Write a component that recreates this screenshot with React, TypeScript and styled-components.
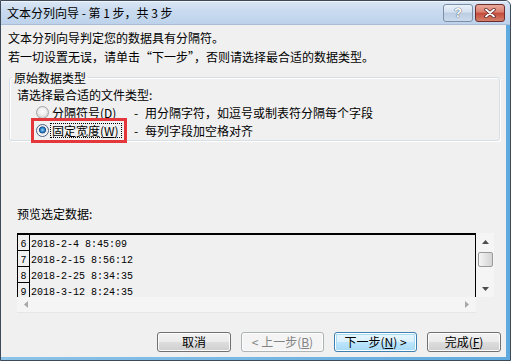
import styled, { createGlobalStyle, css } from 'styled-components';

const FONT = `"Noto Sans CJK SC", "Liberation Sans", sans-serif`;

const GlobalStyle = createGlobalStyle`
  html, body { margin: 0; padding: 0; background: #fff; overflow: hidden; }
  body { font-family: ${FONT}; font-size: 12px; color: #000; }
`;

const Window = styled.div`
  width: 511px;
  height: 361px;
  box-sizing: border-box;
  display: flex;
  flex-direction: column;
  border: 1px solid #3e4a57;
  border-top-right-radius: 6px;
  overflow: hidden;
  background: #5eaadf;
`;

const TitleBar = styled.div`
  height: 23px;
  flex-shrink: 0;
  display: flex;
  align-items: center;
  justify-content: space-between;
  padding: 0 5px 0 6px;
  background: linear-gradient(#dae7f5, #c8daef 45%, #bdd3eb);
  border-bottom: 1px solid #a9bed6;
  box-shadow: inset 0 1px 0 #f0f5fb;
`;

const TitleText = styled.span`
  line-height: 16px;
  color: #000;
`;

const CaptionButtons = styled.div`
  display: flex;
  gap: 2px;
`;

const CaptionButton = styled.span<{ $close?: boolean }>`
  width: 30px;
  height: 18px;
  box-sizing: border-box;
  border-radius: 3px;
  display: flex;
  align-items: center;
  justify-content: center;
  font: bold 13px/1 "Liberation Sans", sans-serif;
  color: #fff;
  text-shadow: 0 0 1px #45556a, 0 0 1px #45556a;
  ${({ $close }) =>
    $close
      ? css`
          border: 1px solid #6d2d2d;
          background: linear-gradient(#e9a99b, #d98070 45%, #c54a3b 50%, #d2806a);
        `
      : css`
          border: 1px solid #7d8fa6;
          background: linear-gradient(#eaf1f9, #d3e0ef 45%, #bccde3 50%, #cbdaeb);
        `}
`;

const Frame = styled.div`
  flex: 1;
  min-height: 0;
  display: flex;
  padding: 0 4px 3px 0;
  background: linear-gradient(to right, #8cc3e8, #5eaadf);
`;

const Client = styled.div`
  flex: 1;
  display: flex;
  flex-direction: column;
  background: #f0f0f0;
  padding: 3px 5px 0 7px;
`;

const IntroLine = styled.div`
  line-height: 19px;
  white-space: nowrap;
`;

const GroupBox = styled.fieldset`
  margin: 4px 1px 0 1px;
  padding: 2px 6px 1px 7px;
  min-width: 0;
  border: 1px solid #d5dfe5;
  border-radius: 3px;
  box-shadow: inset 1px 1px 0 #fff, 1px 1px 0 #fff;
`;

const GroupTitle = styled.legend`
  margin-left: -5px;
  padding: 0 2px;
  line-height: 15px;
`;

const Prompt = styled.div`
  line-height: 16px;
`;

const OptionRow = styled.div`
  display: flex;
  align-items: center;
  height: 18px;
  padding-left: 19px;
  white-space: nowrap;
`;

const Pick = styled.span<{ $marked?: boolean }>`
  display: inline-flex;
  align-items: center;
  gap: 1px;
  ${({ $marked }) =>
    $marked &&
    css`
      outline: 3px solid #e4373c;
      outline-offset: 2px;
    `}
`;

const Radio = styled.span<{ $checked?: boolean }>`
  width: 13px;
  height: 13px;
  box-sizing: border-box;
  border-radius: 50%;
  border: 1px solid ${({ $checked }) => ($checked ? '#4d6185' : '#a3a3a3')};
  background: ${({ $checked }) =>
    $checked
      ? 'radial-gradient(circle at 50% 45%, #9fdcf8 0, #3d91d3 1.6px, #1a4f8f 3.2px, #e6e6e6 3.8px, #fbfbfb 5.5px)'
      : 'radial-gradient(circle at 50% 40%, #fdfdfd 0, #ececec 4px, #d6d6d6 6px)'};
`;

const OptionLabel = styled.span<{ $focused?: boolean }>`
  width: 68px;
  padding: 0 1px;
  line-height: 13px;
  border: 1px dotted ${({ $focused }) => ($focused ? '#000' : 'transparent')};

  u {
    text-decoration-thickness: 1px;
  }
`;

const OptionHint = styled.span`
  margin-left: 12px;

  b {
    font-weight: normal;
    display: inline-block;
    width: 11px;
  }
`;

const PreviewCaption = styled.div`
  margin: 64px 0 0 9px;
  line-height: 17px;
`;

const Preview = styled.div`
  margin: 11px 0 0 9px;
  width: 477px;
  display: grid;
  grid-template-columns: 459px 18px;
  grid-template-rows: 64px 16px;
`;

const Sheet = styled.div`
  border: solid #000;
  border-width: 2px 1px 0 1px;
  overflow: hidden;
  background: #f0f0f0;
`;

const SheetRow = styled.div`
  display: flex;
  height: 16px;
  font: 10px/11px "Liberation Mono", monospace;
  color: #000;
`;

const RowNo = styled.span`
  width: 12px;
  padding-top: 4px;
  box-sizing: border-box;
  text-align: center;
  border-right: 1px solid #000;
  border-bottom: 1px solid #000;
`;

const Cell = styled.span`
  padding: 4px 0 0 1px;
`;

const VScroll = styled.div`
  display: flex;
  flex-direction: column;
  align-items: center;
  padding: 7px 0 6px;
  background: #f5f5f5;
`;

const Thumb = styled.span`
  width: 15px;
  height: 15px;
  box-sizing: border-box;
  margin-top: 8px;
  border: 1px solid #9a9a9a;
  border-radius: 2px;
  background: linear-gradient(to right, #f5f5f5, #e4e4e4 50%, #d4d4d4);
`;

const Spacer = styled.span`
  flex: 1;
`;

const HScroll = styled.div`
  display: flex;
  align-items: center;
  justify-content: space-between;
  padding: 0 7px;
  background: #f5f5f5;
  border-bottom: 1px solid #e6e6e6;
`;

const Corner = styled.div`
  background: #f0f0f0;
`;

const Actions = styled.div`
  display: flex;
  justify-content: flex-end;
  gap: 10px;
  margin-top: 19px;
`;

const Button = styled.button<{ $w: number; $kind?: 'default' | 'disabled' }>`
  width: ${({ $w }) => $w}px;
  height: 20px;
  padding: 0;
  box-sizing: border-box;
  font: 12px/16px ${FONT};
  color: #000;
  border: 1px solid #707070;
  border-radius: 3px;
  background: linear-gradient(#f2f2f2, #ebebeb 50%, #dddddd 50%, #cfcfcf);
  box-shadow: inset 0 0 0 1px #fcfcfc;
  ${({ $kind }) =>
    $kind === 'default' &&
    css`
      border-color: #3c7fb1;
      background: linear-gradient(#eaf6fd, #d9f0fc 50%, #bee6fd 50%, #a7d9f5);
      box-shadow: inset 0 0 0 1px #fff, inset 0 0 0 2px #a9dcf6;
    `}
  ${({ $kind }) =>
    $kind === 'disabled' &&
    css`
      color: #838383;
      border-color: #adb2b5;
      background: #f4f4f4;
    `}
`;

const Arrow = ({ dir, color }: { dir: 'up' | 'down' | 'left' | 'right'; color: string }) => {
  const shapes = {
    up: { w: 7, h: 4, p: '0,4 3.5,0 7,4' },
    down: { w: 7, h: 4, p: '0,0 7,0 3.5,4' },
    left: { w: 4, h: 7, p: '4,0 4,7 0,3.5' },
    right: { w: 4, h: 7, p: '0,0 4,3.5 0,7' },
  };
  const s = shapes[dir];
  return (
    <svg width={s.w} height={s.h} viewBox={`0 0 ${s.w} ${s.h}`}>
      <polygon points={s.p} fill={color} />
    </svg>
  );
};

const rows = [
  { no: '6', value: '2018-2-4 8:45:09' },
  { no: '7', value: '2018-2-15 8:56:12' },
  { no: '8', value: '2018-2-25 8:34:35' },
  { no: '9', value: '2018-3-12 8:24:35' },
];

export default function App() {
  return (
    <>
      <GlobalStyle />
      <Window lang="zh-CN">
        <TitleBar>
          <TitleText>文本分列向导 - 第 1 步，共 3 步</TitleText>
          <CaptionButtons>
            <CaptionButton>?</CaptionButton>
            <CaptionButton $close>
              <svg width="12" height="10" viewBox="0 0 12 10">
                <path d="M2 1.5 L10 8.5 M10 1.5 L2 8.5" stroke="#5a2424" strokeWidth="3.4" strokeLinecap="round" />
                <path d="M2 1.5 L10 8.5 M10 1.5 L2 8.5" stroke="#fff" strokeWidth="1.8" strokeLinecap="round" />
              </svg>
            </CaptionButton>
          </CaptionButtons>
        </TitleBar>
        <Frame>
          <Client>
            <IntroLine>文本分列向导判定您的数据具有分隔符。</IntroLine>
            <IntroLine>若一切设置无误，请单击“下一步”，否则请选择最合适的数据类型。</IntroLine>

            <GroupBox>
              <GroupTitle>原始数据类型</GroupTitle>
              <Prompt>请选择最合适的文件类型:</Prompt>
              <OptionRow>
                <Pick>
                  <Radio />
                  <OptionLabel>
                    分隔符号(<u>D</u>)
                  </OptionLabel>
                </Pick>
                <OptionHint>
                  <b>-</b>用分隔字符，如逗号或制表符分隔每个字段
                </OptionHint>
              </OptionRow>
              <OptionRow>
                <Pick $marked>
                  <Radio $checked />
                  <OptionLabel $focused>
                    固定宽度(<u>W</u>)
                  </OptionLabel>
                </Pick>
                <OptionHint>
                  <b>-</b>每列字段加空格对齐
                </OptionHint>
              </OptionRow>
            </GroupBox>

            <PreviewCaption>预览选定数据:</PreviewCaption>
            <Preview>
              <Sheet>
                {rows.map((r) => (
                  <SheetRow key={r.no}>
                    <RowNo>{r.no}</RowNo>
                    <Cell>{r.value}</Cell>
                  </SheetRow>
                ))}
              </Sheet>
              <VScroll>
                <Arrow dir="up" color="#4d4d4d" />
                <Thumb />
                <Spacer />
                <Arrow dir="down" color="#4d4d4d" />
              </VScroll>
              <HScroll>
                <Arrow dir="left" color="#a8a8a8" />
                <Arrow dir="right" color="#a8a8a8" />
              </HScroll>
              <Corner />
            </Preview>

            <Actions>
              <Button $w={74}>取消</Button>
              <Button $w={83} $kind="disabled">
                &lt; 上一步(<u>B</u>)
              </Button>
              <Button $w={83} $kind="default">
                下一步(<u>N</u>) &gt;
              </Button>
              <Button $w={74}>
                完成(<u>F</u>)
              </Button>
            </Actions>
          </Client>
        </Frame>
      </Window>
    </>
  );
}
